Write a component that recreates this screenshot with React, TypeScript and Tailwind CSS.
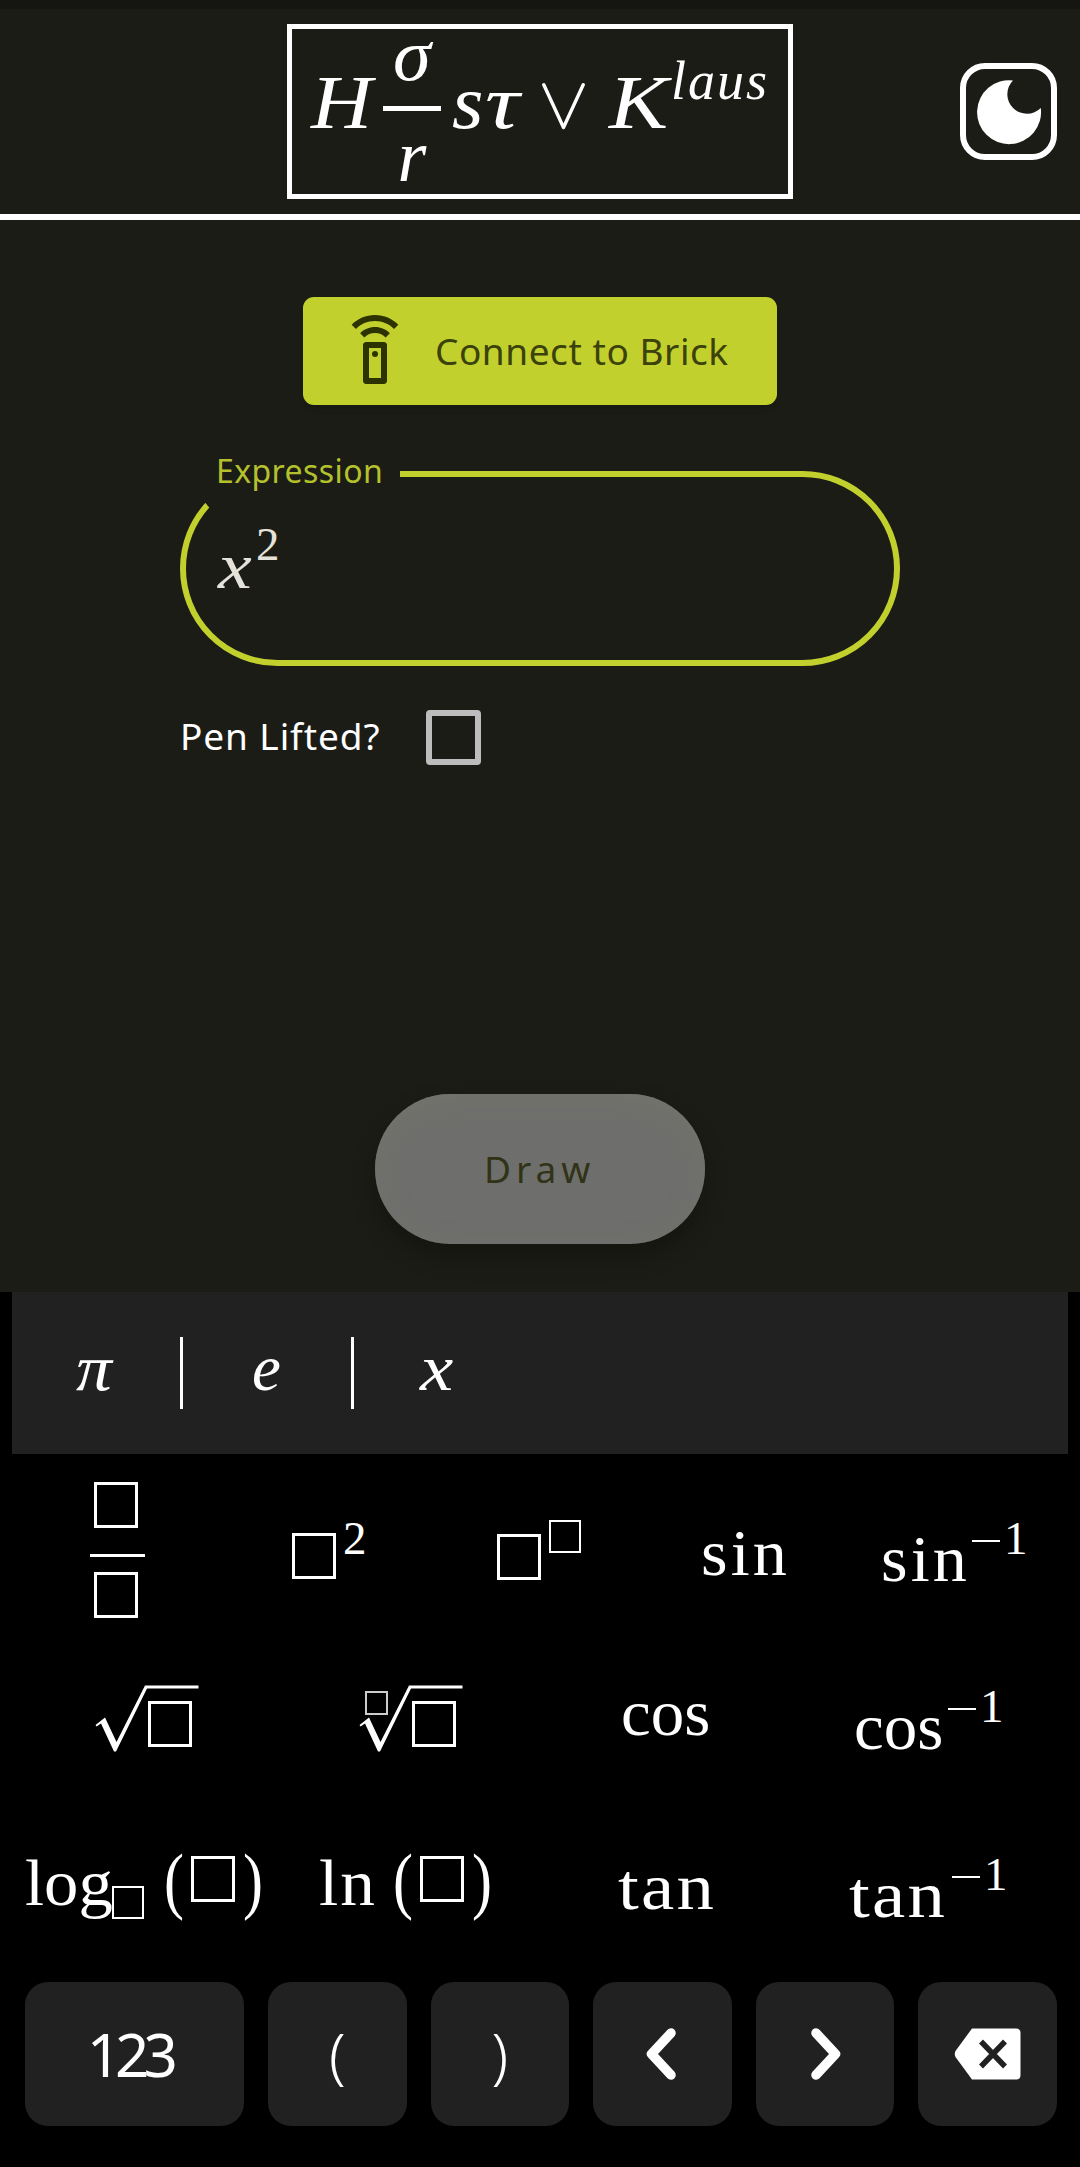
import type { ReactNode } from "react";
import { MdOutlineSettingsRemote } from "react-icons/md";

function Slot({ className = "" }: { className?: string }) {
  return <span className={`block shrink-0 border-white ${className}`} />;
}

function Txt({ className = "", children }: { className?: string; children: ReactNode }) {
  return <span className={`block shrink-0 whitespace-nowrap leading-none ${className}`}>{children}</span>;
}

function Radical() {
  return (
    <svg className="block h-[68px] w-[105px]" viewBox="0 0 105 68" fill="none">
      <path d="M50 0.5H103.5V3.5H52L21 66.5H19L6 38.5L1.5 41.5L0.5 40L10 32.5L21.5 57L49.5 1.5Z" fill="white" />
    </svg>
  );
}

function Inverse({ name, base, lead }: { name: string; base: string; lead: string }) {
  return (
    <div className={`flex shrink-0 items-start ${lead}`}>
      <Txt className={base}>{name}</Txt>
      <span className="mt-[18px] ml-[7px] block h-[2px] w-[28px] shrink-0 bg-white" />
      <Txt className="-mt-[7px] ml-[4px] w-[23px] text-[47px]">1</Txt>
    </div>
  );
}

function Key({ wide = false, children }: { wide?: boolean; children: ReactNode }) {
  return (
    <button
      className={`flex h-[144px] items-center justify-center rounded-[23px] bg-[#212121] ${wide ? "w-[219.5px]" : "w-[138.5px]"}`}
    >
      {children}
    </button>
  );
}

function Header() {
  return (
    <header className="flex h-[220px] items-start border-b-[6px] border-t-[9px] border-b-white border-t-[#151611]">
      <div className="mt-[15px] ml-[287px] flex h-[175px] w-[506px] shrink-0 items-start border-[5px] border-white font-['Liberation_Serif',serif] text-[77px] font-normal italic">
        <Txt className="mt-[35px] ml-[19px] w-[68px] origin-left scale-x-110">H</Txt>
        <div className="ml-[4px] flex w-[58px] shrink-0 flex-col items-center">
          <Txt className="-mt-[10px] h-[75px] scale-x-105 text-[73px]">σ</Txt>
          <span className="mt-[12px] block h-[5px] w-[58px] bg-white" />
          <Txt className="mt-[8px] text-[74px]">r</Txt>
        </div>
        <Txt className="mt-[35px] ml-[11px] w-[33px] origin-left scale-x-105">s</Txt>
        <Txt className="mt-[35px] w-[44px] origin-left scale-x-125">τ</Txt>
        <svg className="mt-[54px] ml-[13px] block h-[47px] w-[43px] shrink-0" viewBox="0 0 43 47" fill="none">
          <path d="M1.8 1.8L21.5 44.5L41.2 1.8" stroke="white" strokeWidth="3.4" strokeLinecap="round" strokeLinejoin="round" />
        </svg>
        <Txt className="mt-[35px] ml-[24px] w-[62px] origin-left scale-x-115">K</Txt>
        <Txt className="mt-[25px] text-[54px] tracking-[2px]">laus</Txt>
      </div>
      <button className="mt-[54px] ml-[167px] flex h-[97px] w-[97px] shrink-0 items-center justify-center rounded-[25px] border-[6px] border-white">
        <svg className="block h-[66px] w-[66px]" viewBox="0 0 66 66">
          <path d="M37 1.4A32 32 0 1 0 64.8 29A19 19 0 1 1 37 1.4Z" fill="white" />
        </svg>
      </button>
    </header>
  );
}

export default function App() {
  return (
    <div className="flex h-[2167px] w-[1080px] flex-col overflow-hidden bg-black text-white">
      <div className="h-[1292px] shrink-0 bg-[#1c1c16] font-['Noto_Sans',sans-serif]">
        <Header />
        <main className="flex flex-col items-start">
          <button className="mt-[77px] ml-[303px] flex h-[108px] w-[474px] items-start rounded-[11px] bg-[#c2d02e] text-[#2d3300] shadow-md">
            <MdOutlineSettingsRemote className="mt-[18px] ml-[36px] size-[72px] shrink-0" />
            <Txt className="mt-[35px] ml-[24px] text-[37px] tracking-[0.55px] text-[#3b420b]">Connect to Brick</Txt>
          </button>
          <div className="relative mt-[66px] ml-[180px] h-[195px] w-[720px]">
            <div className="absolute inset-0 rounded-full border-[6px] border-[#c2d02e] [clip-path:polygon(0_1px,60px_74px,220px_74px,220px_0,100%_0,100%_100%,0_100%)]" />
            <Txt className="absolute -top-[16px] left-[36px] text-[32px] tracking-[0.4px] text-[#b4c12d]">Expression</Txt>
            <div className="flex items-start font-['Liberation_Serif',serif] text-[#e5e2da]">
              <Txt className="mt-[62px] ml-[38px] w-[38px] origin-left scale-x-115 text-[66px] italic">x</Txt>
              <Txt className="mt-[50px] text-[47px]">2</Txt>
            </div>
          </div>
          <label className="mt-[44px] ml-[180px] flex items-start">
            <Txt className="mt-[7px] w-[246px] text-[37px] tracking-[0.9px]">Pen Lifted?</Txt>
            <span className="block size-[55px] rounded-[4px] border-[6px] border-[#bdbdbd]" />
          </label>
          <button className="mt-[329px] ml-[375px] flex h-[150px] w-[330px] items-start rounded-full bg-[#6e6e6c] text-[#313317] shadow-[0_12px_24px_rgba(0,0,0,0.25),inset_0_8px_24px_#73746c]">
            <Txt className="mt-[56px] ml-[109px] text-[37px] tracking-[5px]">Draw</Txt>
          </button>
        </main>
      </div>

      <section className="flex flex-1 flex-col font-['Liberation_Serif',serif] text-[65px]">
        <div className="mx-[12px] flex h-[162px] shrink-0 items-start bg-[#212121] italic">
          <Txt className="mt-[44px] ml-[64px] w-[104px] origin-left scale-x-110">π</Txt>
          <span className="mt-[45px] block h-[72px] w-[3px] bg-white" />
          <Txt className="mt-[44px] ml-[69px] w-[99px]">e</Txt>
          <span className="mt-[45px] block h-[72px] w-[3px] bg-white" />
          <Txt className="mt-[44px] ml-[66px] origin-left scale-x-115">x</Txt>
        </div>

        <div className="flex h-[190px] shrink-0 items-start">
          <div className="mt-[28px] ml-[90px] flex w-[55px] shrink-0 flex-col items-center">
            <Slot className="mr-[3px] h-[46px] w-[44px] border-[3px]" />
            <span className="mt-[26px] block h-[3px] w-[55px] bg-white" />
            <Slot className="mt-[15px] mr-[3px] h-[46px] w-[44px] border-[3px]" />
          </div>
          <Slot className="mt-[79px] ml-[147px] h-[46px] w-[44px] border-[3px]" />
          <Txt className="mt-[61px] ml-[7px] w-[24px] text-[47px]">2</Txt>
          <Slot className="mt-[80px] ml-[130px] h-[46px] w-[44px] border-[3px]" />
          <Slot className="mt-[66px] ml-[8px] h-[33px] w-[32px] border-2" />
          <Txt className="mt-[67px] ml-[120px] w-[85px] origin-left scale-x-105 tracking-[3px]">sin</Txt>
          <Inverse name="sin" lead="mt-[68px] ml-[95px]" base="mt-[5px] w-[84px] origin-left scale-x-105 tracking-[3px]" />
        </div>

        <div className="flex h-[150px] shrink-0 items-start">
          <div className="relative mt-[41px] ml-[95px] shrink-0">
            <Radical />
            <Slot className="absolute top-[16px] left-[53px] h-[46px] w-[44px] border-[3px]" />
          </div>
          <div className="relative mt-[41px] ml-[159px] shrink-0">
            <Radical />
            <Slot className="absolute top-[16px] left-[53px] h-[46px] w-[44px] border-[3px]" />
            <Slot className="absolute top-[6px] left-[6px] h-[24px] w-[23px] border-2 opacity-80" />
          </div>
          <Txt className="mt-[37px] ml-[157px] w-[90px] origin-left scale-x-103">cos</Txt>
          <Inverse name="cos" lead="mt-[46px] ml-[143px]" base="mt-[5px] w-[87px] origin-left scale-x-103" />
        </div>

        <div className="flex h-[188px] shrink-0 items-start">
          <Txt className="mt-[56px] ml-[25px] w-[87px] origin-left scale-x-104 text-[66px]">log</Txt>
          <Slot className="mt-[92px] h-[33px] w-[32px] border-2" />
          <Txt className="mt-[48px] ml-[20px] w-[27px] origin-left scale-x-80 text-[75px]">(</Txt>
          <Slot className="mt-[62px] h-[46px] w-[44px] border-[3px]" />
          <Txt className="mt-[48px] ml-[8px] w-[25px] origin-left scale-x-80 text-[75px]">)</Txt>
          <Txt className="mt-[56px] ml-[51px] w-[58px] origin-left scale-x-105 text-[66px] tracking-[2px]">ln</Txt>
          <Txt className="mt-[48px] ml-[16px] w-[27px] origin-left scale-x-80 text-[75px]">(</Txt>
          <Slot className="mt-[62px] h-[46px] w-[44px] border-[3px]" />
          <Txt className="mt-[48px] ml-[8px] w-[25px] origin-left scale-x-80 text-[75px]">)</Txt>
          <Txt className="mt-[61px] ml-[121px] w-[96px] origin-left scale-x-115 tracking-[2px]">tan</Txt>
          <Inverse name="tan" lead="mt-[64px] ml-[135px]" base="mt-[5px] w-[96px] origin-left scale-x-115 tracking-[2px]" />
        </div>

        <div className="ml-[24.5px] flex gap-[24px] font-['Noto_Sans',sans-serif]">
          <Key wide>
            <Txt className="-ml-[10px] text-[60px] tracking-[-6px]">123</Txt>
          </Key>
          <Key>
            <Txt className="text-[60px] font-light">(</Txt>
          </Key>
          <Key>
            <Txt className="text-[60px] font-light">)</Txt>
          </Key>
          <Key>
            <svg className="block h-[54px] w-[32px]" viewBox="0 0 32 54" fill="none">
              <path d="M25 6L5.5 27L25 48" stroke="white" strokeWidth="9.5" strokeLinecap="round" strokeLinejoin="round" />
            </svg>
          </Key>
          <Key>
            <svg className="block h-[54px] w-[32px]" viewBox="0 0 32 54" fill="none">
              <path d="M7 6L26.5 27L7 48" stroke="white" strokeWidth="9.5" strokeLinecap="round" strokeLinejoin="round" />
            </svg>
          </Key>
          <Key>
            <svg className="block h-[52px] w-[67px]" viewBox="0 0 67 52" fill="none">
              <path d="M18 0.5H62Q66.5 0.5 66.5 5V47Q66.5 51.5 62 51.5H18L1.5 29Q0 26 1.5 23Z" fill="white" />
              <path d="M27 13.5L51 38.5M51 13.5L27 38.5" stroke="#212121" strokeWidth="5.5" />
            </svg>
          </Key>
        </div>
      </section>
    </div>
  );
}
